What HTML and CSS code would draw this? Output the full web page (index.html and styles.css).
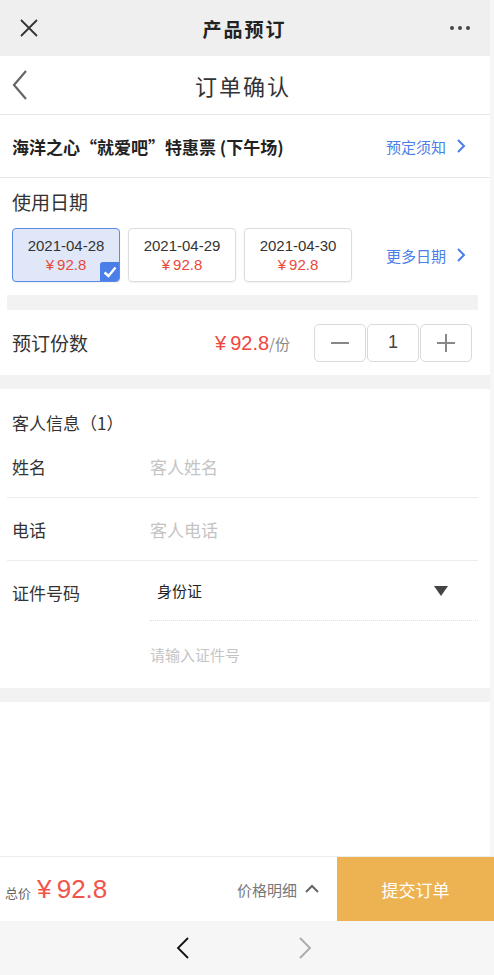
FILE: index.html
```html
<!DOCTYPE html>
<html lang="zh">
<head>
<meta charset="utf-8">
<title>产品预订</title>
<link rel="stylesheet" href="styles.css">
</head>
<body>
<div class="page">
  <header class="topbar">
    <svg class="close" width="20" height="20" viewBox="0 0 20 20"><path d="M2 2 L18 18 M18 2 L2 18" stroke="#333" stroke-width="1.8" fill="none"/></svg>
    <div class="topbar-title">产品预订</div>
    <div class="dots"><span></span><span></span><span></span></div>
  </header>

  <nav class="navbar">
    <svg class="back" width="16" height="30" viewBox="0 0 16 30"><path d="M14 1 L2 15 L14 29" stroke="#666" stroke-width="2.2" fill="none"/></svg>
    <div class="navbar-title">订单确认</div>
  </nav>

  <section class="product">
    <div class="product-name">海洋之心“就爱吧”特惠票 (下午场)</div>
    <a class="link">预定须知<svg width="10" height="16" viewBox="0 0 10 16"><path d="M2 2 L8 8 L2 14" stroke="#4a7ee8" stroke-width="2" fill="none"/></svg></a>
  </section>

  <section class="dates">
    <div class="label">使用日期</div>
    <div class="date-row">
      <div class="date-card selected">
        <div class="date">2021-04-28</div>
        <div class="price"><span class="yen">¥</span>92.8</div>
        <span class="check"><svg width="14" height="12" viewBox="0 0 14 12"><path d="M1.5 6.5 L5.5 10 L12.5 1.5" stroke="#fff" stroke-width="2.4" fill="none"/></svg></span>
      </div>
      <div class="date-card">
        <div class="date">2021-04-29</div>
        <div class="price"><span class="yen">¥</span>92.8</div>
      </div>
      <div class="date-card">
        <div class="date">2021-04-30</div>
        <div class="price"><span class="yen">¥</span>92.8</div>
      </div>
      <a class="link more">更多日期<svg width="10" height="16" viewBox="0 0 10 16"><path d="M2 2 L8 8 L2 14" stroke="#4a7ee8" stroke-width="2" fill="none"/></svg></a>
    </div>
  </section>
  <div class="band band-inset"></div>

  <section class="qty">
    <div class="label">预订份数</div>
    <div class="unit-price"><span class="red"><span class="yen">¥</span>92.8</span><span class="per">/份</span></div>
    <div class="stepper">
      <div class="step"><svg width="18" height="2" viewBox="0 0 18 2"><rect width="18" height="2" fill="#888"/></svg></div>
      <div class="step num">1</div>
      <div class="step"><svg width="18" height="18" viewBox="0 0 18 18"><rect y="8" width="18" height="2" fill="#888"/><rect x="8" width="2" height="18" fill="#888"/></svg></div>
    </div>
  </section>
  <div class="band"></div>

  <section class="guest">
    <div class="guest-title">客人信息（1）</div>
    <div class="field">
      <div class="field-label">姓名</div>
      <div class="placeholder">客人姓名</div>
    </div>
    <div class="field">
      <div class="field-label">电话</div>
      <div class="placeholder">客人电话</div>
    </div>
    <div class="field id-field">
      <div class="field-label">证件号码</div>
      <div class="id-inputs">
        <div class="select">身份证<svg width="14" height="10" viewBox="0 0 14 10"><path d="M0 0 H14 L7 10 Z" fill="#444"/></svg></div>
        <div class="placeholder small">请输入证件号</div>
      </div>
    </div>
  </section>
  <div class="band"></div>

  <div class="spacer"></div>

  <footer class="bottom">
    <div class="total"><span class="total-label">总价</span><span class="total-price"><span class="yen">¥</span>92.8</span></div>
    <div class="detail">价格明细<svg width="16" height="10" viewBox="0 0 16 10"><path d="M2 8 L8 2 L14 8" stroke="#666" stroke-width="2" fill="none"/></svg></div>
    <button class="submit">提交订单</button>
  </footer>
  <div class="browser-nav">
    <svg width="14" height="24" viewBox="0 0 14 24"><path d="M12 2 L2 12 L12 22" stroke="#111" stroke-width="1.8" fill="none"/></svg>
    <svg width="14" height="24" viewBox="0 0 14 24"><path d="M2 2 L12 12 L2 22" stroke="#aaa" stroke-width="1.8" fill="none"/></svg>
  </div>
</div>
</body>
</html>
```

FILE: styles.css
```css
* { box-sizing: border-box; }
html, body { margin: 0; padding: 0; }
body {
  font-family: "Noto Sans CJK SC", "Noto Sans", "Liberation Sans", sans-serif;
  color: #333;
  background: #fff;
}
.page {
  width: 494px;
  min-height: 975px;
  display: flex;
  flex-direction: column;
  border-right: 4px solid #f6f6f6;
}
.topbar {
  height: 56px;
  background: #efefef;
  display: flex;
  align-items: center;
  justify-content: space-between;
  padding: 0 20px 0 19px;
}
.topbar-title {
  font-size: 19px;
  font-weight: 700;
  color: #222;
  letter-spacing: 2px;
}
.dots { display: flex; gap: 4px; width: 20px; }
.dots span { width: 4px; height: 4px; border-radius: 50%; background: #444; }
.navbar {
  height: 59px;
  display: flex;
  align-items: center;
  position: relative;
  border-bottom: 1px solid #e6e6e6;
  padding-left: 12px;
}
.navbar-title {
  position: absolute;
  left: 0; right: 4px; text-align: center;
  font-size: 22px;
  color: #333;
  letter-spacing: 2px;
}
.product {
  height: 63px;
  display: flex;
  align-items: center;
  justify-content: space-between;
  padding: 0 24px 0 12px;
  border-bottom: 1px solid #e8e8e8;
}
.product-name { font-size: 17px; font-weight: 700; color: #222; }
.link {
  color: #4a7ee8;
  font-size: 15px;
  display: flex;
  align-items: center;
  gap: 10px;
}
.dates { padding: 10px 24px 13px 12px; }
.label { font-size: 19px; color: #333; }
.date-row {
  margin-top: 13px;
  display: flex;
  align-items: center;
  gap: 8px;
}
.date-card {
  width: 108px;
  height: 54px;
  border: 1px solid #dcdcdc;
  border-radius: 4px;
  display: flex;
  flex-direction: column;
  align-items: center;
  justify-content: center;
  position: relative;
  overflow: hidden;
  box-shadow: 0 1px 2px rgba(0,0,0,0.06);
}
.date-card.selected {
  background: #dfe7f8;
  border-color: #5a8ae6;
}
.date {
  font-family: "Liberation Sans", sans-serif;
  font-size: 15px;
  color: #333;
  line-height: 19px;
}
.price {
  font-family: "Liberation Sans", sans-serif;
  font-size: 15px;
  color: #e8493a;
  line-height: 19px;
}
.yen { margin-right: 0.2em; }
.check {
  position: absolute;
  right: 0; bottom: 0;
  width: 19px; height: 19px;
  background: #4a7ee8;
  border-top-left-radius: 3px;
  display: flex; align-items: center; justify-content: center;
}
.more { margin-left: auto; }
.band { height: 14px; background: #f2f2f2; }
.band-inset { margin: 0 12px 0 7px; height: 15px; }
.qty {
  height: 65px;
  display: flex;
  align-items: center;
  padding: 0 18px 0 12px;
}
.unit-price { margin-left: auto; margin-right: 24px; }
.red { color: #f0463c; font-size: 20px; font-family: "Liberation Sans", sans-serif; }
.per { color: #888; font-size: 15px; }
.stepper { display: flex; gap: 1px; }
.step {
  width: 52px; height: 38px;
  border: 1px solid #dadada;
  border-radius: 5px;
  display: flex; align-items: center; justify-content: center;
}
.step.num { font-family: "Liberation Sans", sans-serif; font-size: 18px; color: #444; }
.guest { padding: 21px 12px 0 12px; }
.guest-title { font-size: 17px; color: #333; }
.field {
  display: flex;
  align-items: center;
  height: 63px;
  margin: 0 0 0 -5px;
  padding-left: 5px;
  border-bottom: 1px solid #ececec;
}
.guest .field:first-of-type { height: 62px; }
.field-label { width: 138px; font-size: 17px; color: #333; }
.placeholder { font-size: 17px; color: #c4c4c4; }
.placeholder.small { font-size: 15px; }
.id-field {
  height: auto;
  border-bottom: none;
  align-items: flex-start;
}
.id-field .field-label { padding-top: 19px; }
.id-inputs { flex: 1; }
.select {
  height: 60px;
  display: flex;
  align-items: center;
  justify-content: space-between;
  padding: 0 30px 0 7px;
  font-size: 15px;
  color: #222;
  border-bottom: 1px dotted #e0e0e0;
}
.id-inputs .placeholder { height: 67px; display: flex; align-items: center; }
.spacer { flex: 1; }
.bottom {
  height: 65px;
  display: flex;
  align-items: center;
  border-top: 1px solid #ececec;
  margin-right: -4px;
}
.total { padding-left: 5px; display: flex; align-items: baseline; gap: 6px; }
.total-label { font-size: 13px; color: #666; }
.total-price { font-size: 26px; color: #f0544a; font-family: "Liberation Sans", sans-serif; }
.detail {
  margin-left: auto;
  margin-right: 17px;
  display: flex; align-items: center; gap: 7px;
  font-size: 15px; color: #777;
}
.submit {
  width: 157px;
  height: 64px;
  border: none;
  background: #edb352;
  color: #fff;
  font-family: inherit;
  font-size: 17px;
}
.browser-nav {
  height: 54px;
  background: #f6f6f6;
  display: flex;
  align-items: center;
  justify-content: center;
  gap: 108px;
  margin-right: -4px;
  padding-right: 6px;
}
```
